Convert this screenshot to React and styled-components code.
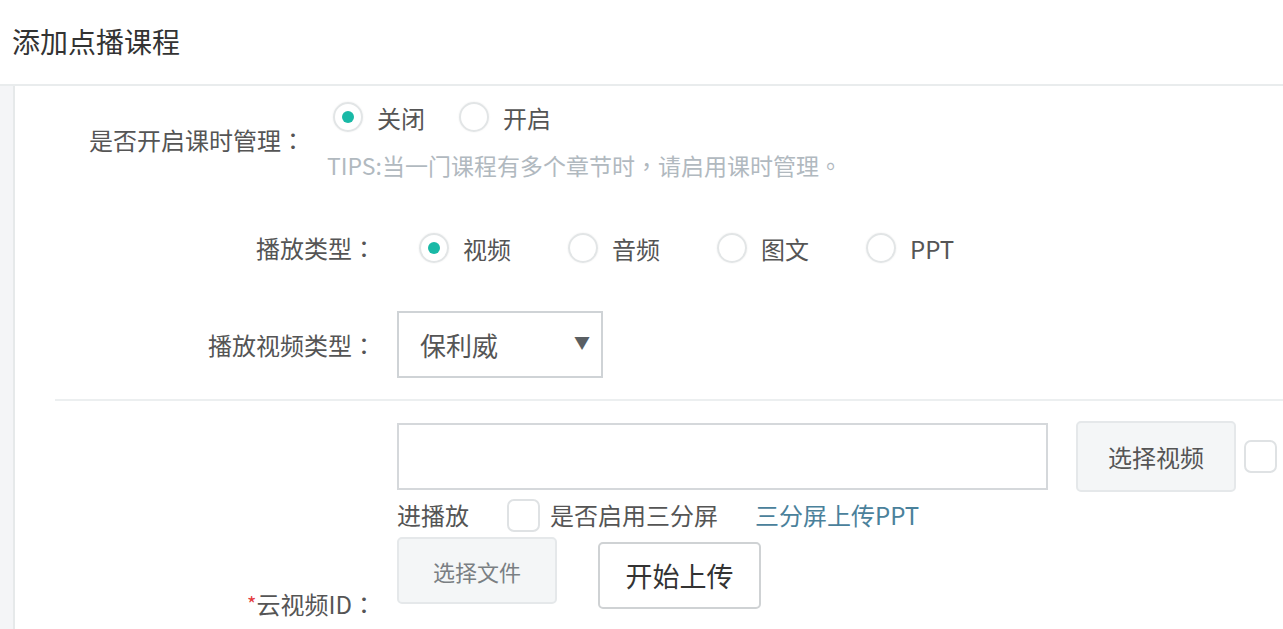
import React, { useState } from "react";
import styled, { createGlobalStyle } from "styled-components";

const GlobalStyle = createGlobalStyle`
  html, body {
    margin: 0;
    padding: 0;
    background: #fff;
  }
  body {
    font-family: "Noto Sans CJK SC", "Noto Sans", sans-serif;
    color: #555;
    overflow: hidden;
  }
`;

const Page = styled.div`
  width: 1283px;
  height: 629px;
  display: flex;
  flex-direction: column;
  overflow: hidden;
`;

const Header = styled.div`
  height: 84px;
  flex-shrink: 0;
  display: flex;
  align-items: center;
  padding-left: 12px;
  border-bottom: 2px solid #e9eced;
`;

const Title = styled.h1`
  margin: 0 0 2px;
  font-size: 28px;
  font-weight: 400;
  color: #333;
`;

const Body = styled.div`
  flex: 1;
  display: flex;
`;

const SideStrip = styled.div`
  width: 13px;
  flex-shrink: 0;
  background: #f4f5f7;
  border-right: 2px solid #e6e9ea;
`;

const Content = styled.div`
  flex: 1;
  display: flex;
  flex-direction: column;
`;

const Row = styled.div`
  display: flex;
  align-items: ${(p) => p.$align || "center"};
  margin-top: ${(p) => p.$top || 0}px;
`;

const Label = styled.div`
  width: ${(p) => p.$width}px;
  flex-shrink: 0;
  text-align: right;
  font-size: 24px;
  line-height: 34px;
  color: #555;
  margin-right: ${(p) => p.$gap || 21}px;
  padding-top: ${(p) => p.$padTop || 0}px;
`;

/* full-width colon centred in its box, as the reference font draws it */
const Colon = styled.span`
  font-family: "Noto Sans CJK TC", "Noto Sans CJK SC", sans-serif;
`;

const Required = styled.span`
  color: #e4393c;
  font-size: 20px;
  vertical-align: top;
`;

const Field = styled.div`
  display: flex;
  flex-direction: column;
`;

const RadioGroup = styled.div`
  display: flex;
  align-items: center;
  margin-left: ${(p) => p.$indent || 0}px;
`;

const RadioOption = styled.label`
  display: flex;
  align-items: center;
  width: ${(p) => p.$width}px;
  height: 34px;
  cursor: pointer;
  font-size: 24px;
  color: #555;
`;

const RadioCircle = styled.span`
  width: 26px;
  height: 26px;
  border-radius: 50%;
  border: 2px solid #e2e5e6;
  box-shadow: 0 0 2px rgba(0, 0, 0, 0.08);
  display: flex;
  align-items: center;
  justify-content: center;
  margin-right: 14px;
  flex-shrink: 0;

  &::after {
    content: "";
    width: 12px;
    height: 12px;
    border-radius: 50%;
    background: ${(p) => (p.$checked ? "#19b9a6" : "transparent")};
  }
`;

const Tips = styled.div`
  margin-top: 16px;
  font-size: 23px;
  line-height: 30px;
  color: #b1b9bf;
  font-family: "Noto Sans CJK TC", "Noto Sans CJK SC", sans-serif;
`;

const Select = styled.div`
  width: 206px;
  height: 67px;
  box-sizing: border-box;
  border: 2px solid #cfd3d6;
  display: flex;
  align-items: center;
  justify-content: space-between;
  padding: 0 11px 0 21px;
  font-size: 26px;
  color: #555;
`;

const Arrow = styled.span`
  font-size: 16px;
  color: #5a5f63;
  margin-bottom: 6px;
`;

const Divider = styled.div`
  height: 2px;
  background: #eceff0;
  margin: 21px 0 0 40px;
`;

const Line = styled.div`
  display: flex;
  align-items: ${(p) => p.$align || "center"};
  margin-top: ${(p) => p.$top || 0}px;
`;

const TextInput = styled.input`
  width: 651px;
  height: 67px;
  box-sizing: border-box;
  border: 2px solid #d5d8db;
  outline: none;
  font-size: 22px;
  padding: 0 12px;
  font-family: inherit;
`;

const GrayButton = styled.button`
  width: ${(p) => p.$w}px;
  height: ${(p) => p.$h}px;
  box-sizing: border-box;
  background: #f4f6f7;
  border: 2px solid #e5e8ea;
  border-radius: 5px;
  font-family: inherit;
  font-size: ${(p) => p.$size || 24}px;
  color: ${(p) => p.$color || "#555"};
  margin-left: ${(p) => p.$ml || 0}px;
  padding: 0;
  cursor: pointer;
`;

const WhiteButton = styled.button`
  width: 163px;
  height: 67px;
  box-sizing: border-box;
  background: #fff;
  border: 2px solid #cfd2d4;
  border-radius: 5px;
  font-family: inherit;
  font-size: 27px;
  color: #333;
  margin-left: 41px;
  margin-top: 5px;
  padding: 0;
  cursor: pointer;
`;

const Checkbox = styled.span`
  width: 33px;
  height: 33px;
  box-sizing: border-box;
  border: 2px solid #dfe2e4;
  border-radius: 7px;
  background: #fff;
  flex-shrink: 0;
  margin-left: ${(p) => p.$ml || 0}px;
  margin-right: ${(p) => p.$mr || 0}px;
`;

const PlainText = styled.span`
  font-size: 24px;
  line-height: 34px;
  color: #555;
`;

const LinkText = styled.a`
  font-size: 24px;
  line-height: 34px;
  color: #4a819b;
  text-decoration: none;
  margin-left: 37px;
  cursor: pointer;
`;

const Radio = ({ label, checked, width, onClick }) => (
  <RadioOption $width={width} onClick={onClick}>
    <RadioCircle $checked={checked} />
    {label}
  </RadioOption>
);

export default function App() {
  const [lesson, setLesson] = useState("关闭");
  const [playType, setPlayType] = useState("视频");

  return (
    <Page>
      <GlobalStyle />
      <Header>
        <Title>添加点播课程</Title>
      </Header>
      <Body>
        <SideStrip />
        <Content>
          <Row $top={14}>
            <Label $width={290} $gap={22}>
              是否开启课时管理<Colon>：</Colon>
            </Label>
            <Field>
              <RadioGroup $indent={6}>
                {["关闭", "开启"].map((o) => (
                  <Radio
                    key={o}
                    label={o}
                    width={126}
                    checked={lesson === o}
                    onClick={() => setLesson(o)}
                  />
                ))}
              </RadioGroup>
              <Tips>TIPS:当一门课程有多个章节时，请启用课时管理。</Tips>
            </Field>
          </Row>

          <Row $top={51}>
            <Label $width={361}>
              播放类型<Colon>：</Colon>
            </Label>
            <RadioGroup $indent={22}>
              {["视频", "音频", "图文", "PPT"].map((o) => (
                <Radio
                  key={o}
                  label={o}
                  width={149}
                  checked={playType === o}
                  onClick={() => setPlayType(o)}
                />
              ))}
            </RadioGroup>
          </Row>

          <Row $top={46}>
            <Label $width={361}>
              播放视频类型<Colon>：</Colon>
            </Label>
            <Select>
              保利威
              <Arrow>▼</Arrow>
            </Select>
          </Row>

          <Divider />

          <Row $top={20} $align="flex-start">
            <Label $width={361} $padTop={166}>
              <Required>*</Required>云视频ID<Colon>：</Colon>
            </Label>
            <Field>
              <Line>
                <TextInput />
                <GrayButton $w={160} $h={71} $ml={28}>
                  选择视频
                </GrayButton>
                <Checkbox $ml={8} />
              </Line>
              <Line $top={6}>
                <PlainText>进播放</PlainText>
                <Checkbox $ml={38} $mr={10} />
                <PlainText>是否启用三分屏</PlainText>
                <LinkText>三分屏上传PPT</LinkText>
              </Line>
              <Line $top={5} $align="flex-start">
                <GrayButton $w={160} $h={67} $size={22} $color="#7a7f83">
                  选择文件
                </GrayButton>
                <WhiteButton>开始上传</WhiteButton>
              </Line>
            </Field>
          </Row>
        </Content>
      </Body>
    </Page>
  );
}
